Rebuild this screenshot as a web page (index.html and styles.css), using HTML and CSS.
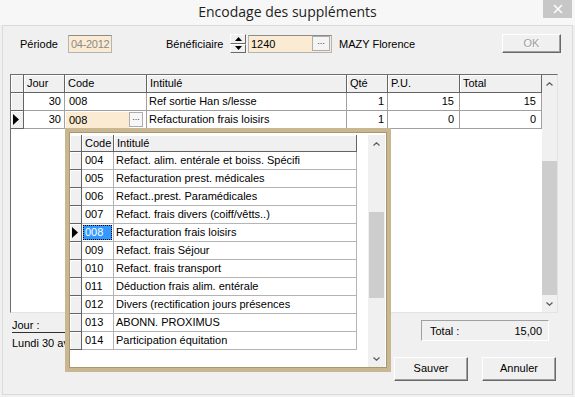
FILE: index.html
```html
<!DOCTYPE html>
<html>
<head>
<meta charset="utf-8">
<link rel="stylesheet" href="styles.css">
</head>
<body>
<div class="window">
  <div class="titlebar">
    <div class="title">Encodage des suppléments</div>
    <div class="close"><svg width="10" height="10" viewBox="0 0 10 10"><path d="M1 1L9 9M9 1L1 9" stroke="#fff" stroke-width="1.5"/></svg></div>
  </div>
  <div class="client">
    <div class="toprow">
      <span class="lbl lbl-periode">Période</span>
      <div class="field periode">04-2012</div>
      <span class="lbl lbl-benef">Bénéficiaire</span>
      <div class="spin">
        <div class="spin-btn"><svg width="7" height="4" viewBox="0 0 7 4"><path d="M0 4L3.5 0L7 4Z" fill="#000"/></svg></div>
        <div class="spin-btn"><svg width="7" height="4" viewBox="0 0 7 4"><path d="M0 0L3.5 4L7 0Z" fill="#000"/></svg></div>
      </div>
      <div class="field benef"><span class="fv">1240</span><span class="dots">...</span></div>
      <span class="lbl name">MAZY Florence</span>
      <div class="btn ok">OK</div>
    </div>

    <div class="grid">
      <div class="gtable">
        <div class="grow hdrow">
          <div class="hd"></div>
          <div class="hd">Jour</div>
          <div class="hd">Code</div>
          <div class="hd">Intitulé</div>
          <div class="hd">Qté</div>
          <div class="hd">P.U.</div>
          <div class="hd">Total</div>
        </div>
        <div class="grow">
          <div class="ind"></div>
          <div class="c num">30</div>
          <div class="c">008</div>
          <div class="c txt">Ref sortie Han s/lesse</div>
          <div class="c num">1</div>
          <div class="c num">15</div>
          <div class="c num">15</div>
        </div>
        <div class="grow">
          <div class="ind"><svg width="7" height="11" viewBox="0 0 7 11"><path d="M0 0L6 5.5L0 11Z" fill="#000"/></svg></div>
          <div class="c num">30</div>
          <div class="c edit"><span class="ev">008</span><span class="edots">...</span></div>
          <div class="c txt">Refacturation frais loisirs</div>
          <div class="c num">1</div>
          <div class="c num">0</div>
          <div class="c num">0</div>
        </div>
      </div>
      <div class="vscroll main-scroll">
        <div class="arrow"><svg width="7" height="4" viewBox="0 0 7 4"><path d="M0.5 3.5L3.5 0.8L6.5 3.5" fill="none" stroke="#606060" stroke-width="1.3"/></svg></div>
        <div class="track"><div class="thumb"></div></div>
        <div class="arrow"><svg width="7" height="4" viewBox="0 0 7 4"><path d="M0.5 0.5L3.5 3.2L6.5 0.5" fill="none" stroke="#606060" stroke-width="1.3"/></svg></div>
      </div>
    </div>

    <div class="bottom">
      <div class="leftinfo">
        <div class="jour">Jour :</div>
        <div class="date">Lundi 30 avril 2012</div>
      </div>
      <div class="rightinfo">
        <div class="totalbox"><span>Total :</span><span>15,00</span></div>
        <div class="buttons">
          <div class="btn">Sauver</div>
          <div class="btn">Annuler</div>
        </div>
      </div>
    </div>
  </div>

  <div class="dropdown">
    <div class="dtable">
      <div class="drow hdrow">
        <div class="hd"></div>
        <div class="hd">Code</div>
        <div class="hd">Intitulé</div>
      </div>
      <div class="drow"><div class="ind"></div><div class="c">004</div><div class="c txt">Refact. alim. entérale et boiss. Spécifi</div></div>
      <div class="drow"><div class="ind"></div><div class="c">005</div><div class="c txt">Refacturation prest. médicales</div></div>
      <div class="drow"><div class="ind"></div><div class="c">006</div><div class="c txt">Refact..prest. Paramédicales</div></div>
      <div class="drow"><div class="ind"></div><div class="c">007</div><div class="c txt">Refact. frais divers (coiff/vêtts..)</div></div>
      <div class="drow"><div class="ind"><svg width="7" height="11" viewBox="0 0 7 11"><path d="M0 0L6 5.5L0 11Z" fill="#000"/></svg></div><div class="c sel"><span>008</span></div><div class="c txt">Refacturation frais loisirs</div></div>
      <div class="drow"><div class="ind"></div><div class="c">009</div><div class="c txt">Refact. frais Séjour</div></div>
      <div class="drow"><div class="ind"></div><div class="c">010</div><div class="c txt">Refact. frais transport</div></div>
      <div class="drow"><div class="ind"></div><div class="c">011</div><div class="c txt">Déduction frais alim. entérale</div></div>
      <div class="drow"><div class="ind"></div><div class="c">012</div><div class="c txt">Divers (rectification jours présences</div></div>
      <div class="drow"><div class="ind"></div><div class="c">013</div><div class="c txt">ABONN. PROXIMUS</div></div>
      <div class="drow"><div class="ind"></div><div class="c">014</div><div class="c txt">Participation équitation</div></div>
    </div>
    <div class="vscroll drop-scroll">
      <div class="arrow"><svg width="7" height="4" viewBox="0 0 7 4"><path d="M0.5 3.5L3.5 0.8L6.5 3.5" fill="none" stroke="#606060" stroke-width="1.3"/></svg></div>
      <div class="track"><div class="thumb"></div></div>
      <div class="arrow"><svg width="7" height="4" viewBox="0 0 7 4"><path d="M0.5 0.5L3.5 3.2L6.5 0.5" fill="none" stroke="#606060" stroke-width="1.3"/></svg></div>
    </div>
  </div>
</div>
</body>
</html>
```

FILE: styles.css
```css
* { box-sizing: border-box; margin: 0; padding: 0; }
html, body { width: 575px; height: 397px; overflow: hidden; }
body {
  font-family: "Liberation Sans", Arial, sans-serif;
  font-size: 11px;
  color: #000;
  background: #f0f0f0;
}
.window {
  position: relative;
  width: 575px;
  height: 397px;
  background: #f0f0f0;
  display: flex;
  flex-direction: column;
}
.titlebar {
  height: 25px;
  flex: none;
  display: flex;
  align-items: flex-start;
  background: #f7f7f7;
  padding-left: 32px;
}
.title {
  flex: 1;
  text-align: center;
  font-family: "Open Sans", sans-serif;
  font-size: 14px;
  line-height: 24px;
  color: #1e1e1e;
}
.close {
  width: 29px;
  height: 18px;
  margin-right: 3px;
  background: #c7c7c7;
  display: flex;
  align-items: center;
  justify-content: center;
}
.client {
  flex: 1;
  margin: 0 2px 2px;
  border: 1px solid #dadada;
  display: flex;
  flex-direction: column;
  background: #f0f0f0;
}

/* top row */
.toprow {
  margin-top: 8px;
  height: 19px;
  padding-left: 17px;
  display: flex;
  align-items: center;
}
.lbl { white-space: nowrap; }
.lbl-periode { width: 48px; }
.field {
  height: 18px;
  background: #fcebd3;
  border: 1px solid #b4b4b4;
  border-top-color: #8c8c8c;
  line-height: 16px;
  padding-left: 2px;
  white-space: nowrap;
  overflow: hidden;
}
.periode { width: 44px; color: #8a8a8a; letter-spacing: -0.3px; padding-left: 2px; }
.lbl-benef { margin-left: 54px; width: 64px; }
.spin {
  width: 16px;
  height: 19px;
  display: flex;
  flex-direction: column;
}
.spin-btn {
  flex: 1;
  background: #f0f0f0;
  border: 1px solid;
  border-color: #fff #696969 #696969 #fff;
  display: flex;
  align-items: center;
  justify-content: center;
}
.benef {
  margin-left: 2px;
  width: 84px;
  display: flex;
  padding-right: 1px;
}
.fv { flex: 1; }
.dots {
  width: 18px;
  height: 15px;
  background: #f4f4f4;
  border: 1px solid #adadad;
  font-size: 9px;
  line-height: 9px;
  text-align: center;
  color: #333;
}
.name { margin-left: 7px; }
.btn {
  height: 24px;
  width: 74px;
  background: #f0f0f0;
  border: 1px solid;
  border-color: #fff #696969 #696969 #fff;
  box-shadow: inset -1px -1px #a0a0a0;
  text-align: center;
  line-height: 21px;
}
.ok {
  margin-left: auto;
  margin-right: 11px;
  width: 59px;
  height: 19px;
  line-height: 16px;
  color: #a0a0a0;
  text-shadow: 1px 1px #fff;
}

/* main grid */
.grid {
  margin-top: 21px;
  margin-left: 7px;
  width: 548px;
  height: 239px;
  flex: none;
  border: 1px solid;
  border-color: #6d6d6d #e3e3e3 #e3e3e3 #6d6d6d;
  display: flex;
  background: #fff;
}
.gtable { flex: 1; background: #fff; }
.grow {
  display: grid;
  grid-template-columns: 13px 41px 82px 200px 41px 72px 82px;
  height: 18px;
}
.hd {
  background: #f0f0f0;
  border-right: 1px solid #646464;
  border-bottom: 1px solid #646464;
  box-shadow: inset 1px 1px #fff;
  padding-left: 3px;
  line-height: 17px;
  white-space: nowrap;
  overflow: hidden;
}
.ind {
  background: #f0f0f0;
  border-right: 1px solid #646464;
  border-bottom: 1px solid #646464;
  box-shadow: inset 1px 1px #fff;
  display: flex;
  align-items: center;
  padding-left: 2px;
}
.c {
  border-right: 1px solid #a0a0a0;
  border-bottom: 1px solid #a0a0a0;
  padding: 0 3px 0 4px;
  line-height: 17px;
  white-space: nowrap;
  overflow: hidden;
}
.c.txt { padding-left: 2px; }
.c.num { text-align: right; padding-right: 3px; }
.grow .c.num:nth-child(6), .grow .c.num:nth-child(7) { padding-right: 5px; }
.c.edit {
  display: flex;
  align-items: center;
  padding: 0 3px 0 1px;
}
.ev {
  flex: 1;
  align-self: stretch;
  background: #fcebd3;
  padding-left: 3px;
  line-height: 16px;
  margin-top: 1px;
}
.edots {
  width: 14px;
  height: 15px;
  background: #f7f7f7;
  border: 1px solid #adadad;
  font-size: 9px;
  line-height: 9px;
  text-align: center;
  color: #333;
}

/* scrollbars */
.vscroll {
  display: flex;
  flex-direction: column;
  background: #f0f0f0;
}
.arrow {
  height: 17px;
  flex: none;
  display: flex;
  align-items: center;
  justify-content: center;
}
.track { flex: 1; display: flex; flex-direction: column; }
.thumb { background: #cdcdcd; }
.main-scroll { width: 15px; }
.main-scroll .track { justify-content: flex-end; }
.main-scroll .thumb { height: 134px; }
.drop-scroll { width: 17px; height: 232px; }
.drop-scroll .thumb { height: 86px; margin-top: 60px; margin-left: 1px; margin-right: 1px; }

/* bottom */
.bottom {
  flex: 1;
  display: flex;
}
.leftinfo {
  margin-left: 9px;
  width: 53px;
  padding-top: 5px;
  overflow: hidden;
  white-space: nowrap;
}
.jour {
  line-height: 14px;
  border-bottom: 1px solid #303030;
}
.date {
  margin-top: 3px;
  line-height: 14px;
}
.rightinfo {
  margin-left: auto;
  margin-right: 16px;
  width: 162px;
  display: flex;
  flex-direction: column;
}
.totalbox {
  margin-top: 7px;
  margin-left: 27px;
  width: 128px;
  height: 21px;
  border: 1px solid;
  border-color: #a0a0a0 #fff #fff #a0a0a0;
  display: flex;
  justify-content: space-between;
  align-items: center;
  padding: 0 6px 0 8px;
}
.buttons {
  margin-top: 16px;
  display: flex;
  justify-content: space-between;
}

/* dropdown overlay */
.dropdown {
  position: absolute;
  left: 65px;
  top: 128px;
  width: 326px;
  height: 244px;
  background: #fff;
  border: 4px solid #c8b791;
  box-shadow: 0 0 0 1px #a8976f inset;
  padding: 3px 2px 1px 1px;
  display: flex;
  justify-content: space-between;
  align-items: flex-start;
}
.dtable { width: 287px; }
.drow {
  display: grid;
  grid-template-columns: 12px 32px 243px;
  height: 18px;
}
.drow.hdrow { height: 17px; }
.drow.hdrow .hd { line-height: 16px; }
.drow .c { border-color: #b4b4b4; padding-left: 3px; }
.drow .c.txt { padding-left: 2px; }
.c.sel { padding: 1px; }
.c.sel span {
  display: block;
  height: 15px;
  background: #3399ff;
  color: #fff;
  outline: 1px dotted #000;
  outline-offset: -1px;
  line-height: 15px;
  padding-left: 2px;
}
```
